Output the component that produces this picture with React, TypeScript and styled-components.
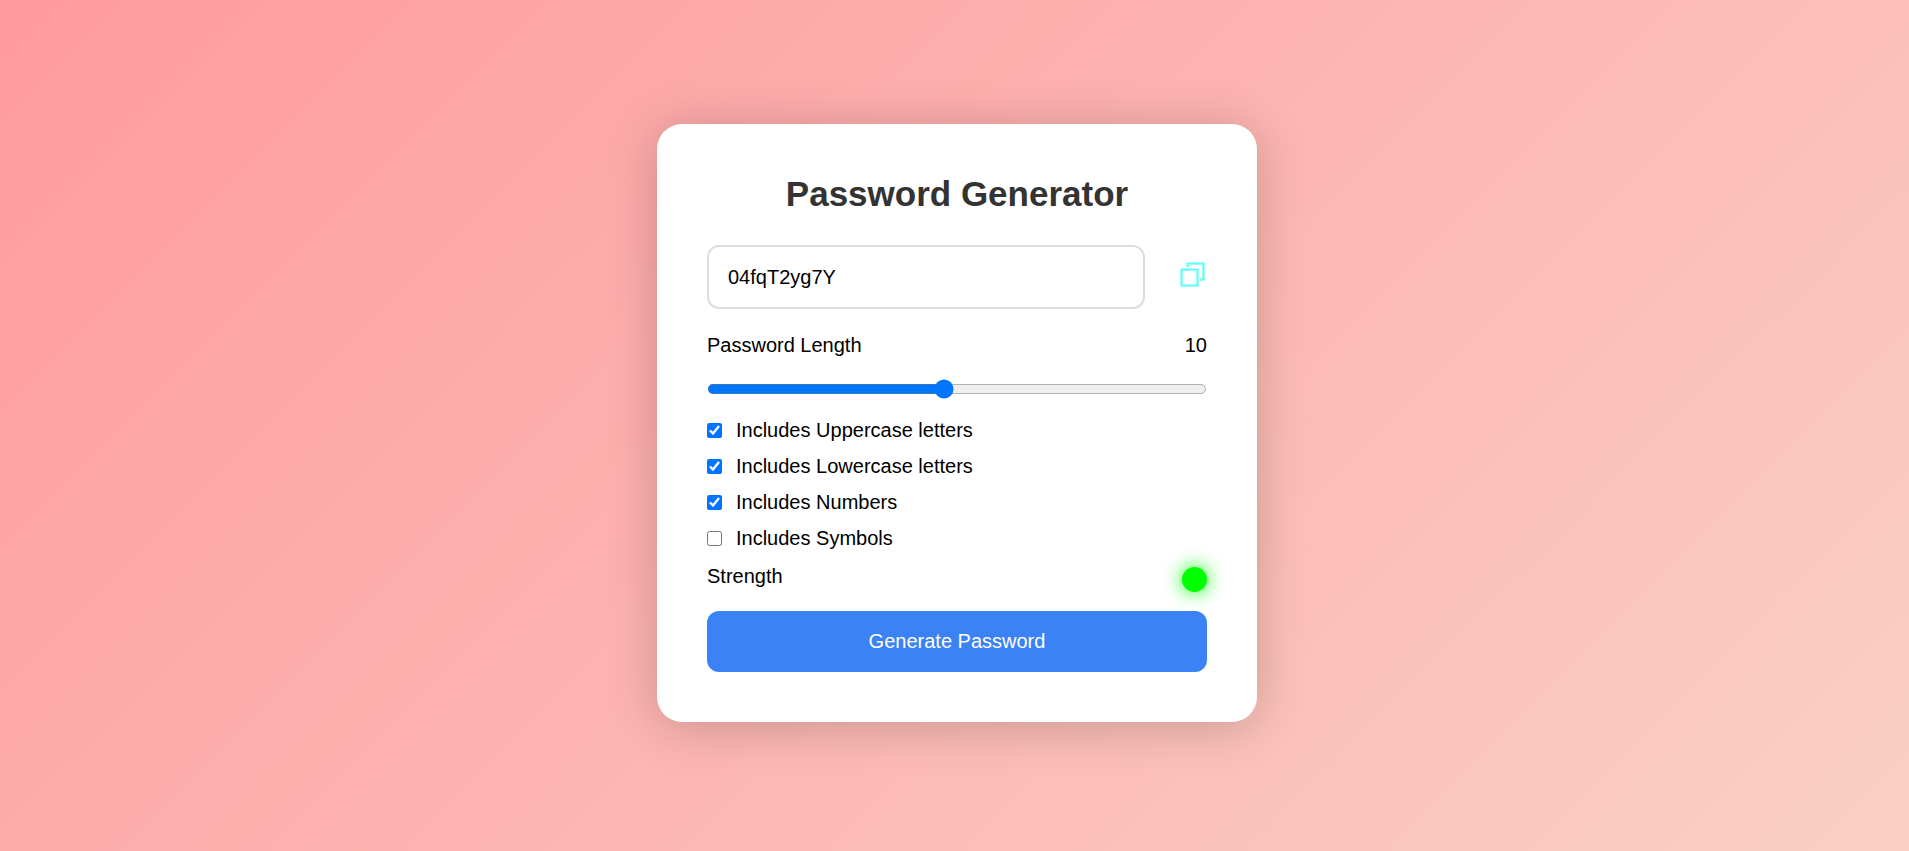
import React, { useState } from "react";
import styled, { createGlobalStyle } from "styled-components";

const GlobalStyle = createGlobalStyle`
  * { box-sizing: border-box; margin: 0; padding: 0; }
  body { font-family: Arial, "Liberation Sans", sans-serif; font-size: 20px; color: #000; }
`;

const Page = styled.main`
  min-height: 100vh;
  padding: 0 0 5px 5px;
  display: flex;
  align-items: center;
  justify-content: center;
  background: linear-gradient(135deg, #ff9a9e, #fad0c4);
`;

const Card = styled.form`
  width: 600px;
  max-width: 100%;
  padding: 50px;
  display: flex;
  flex-direction: column;
  background: #fff;
  border-radius: 25px;
  box-shadow: 0 5px 50px rgba(0, 0, 0, 0.2);
`;

const Title = styled.h1`
  font-size: 35px;
  line-height: 39px;
  color: #333;
  text-align: center;
  margin-bottom: 32px;
`;

const PasswordRow = styled.div`
  display: flex;
  align-items: center;
  gap: 32px;
  margin-bottom: 25px;
`;

const PasswordField = styled.input`
  flex: 1;
  min-width: 0;
  height: 64px;
  padding: 0 19px;
  border: 2px solid #ddd;
  border-radius: 12px;
  font: inherit;
  color: inherit;
`;

const CopyButton = styled.button`
  display: flex;
  padding-bottom: 8px;
  border: 0;
  background: none;
  cursor: pointer;
`;

const Row = styled.div`
  display: flex;
  justify-content: space-between;
  line-height: 23px;
`;

const StrengthRow = styled(Row)`
  height: 27px;
  margin: 15px 0 19px;
`;

const SliderBox = styled.div`
  display: flex;
  margin: 22px 0 19px;
`;

const Slider = styled.input`
  width: 100%;
  height: 16px;
  zoom: 1.25;
`;

const Options = styled.div`
  display: flex;
  flex-direction: column;
  gap: 12px;
`;

const Option = styled.label`
  display: flex;
  align-items: center;
  gap: 14px;
  line-height: 24px;
`;

const CheckBox = styled.input`
  width: 15px;
  height: 15px;
`;

const Indicator = styled.span`
  align-self: flex-end;
  width: 25px;
  height: 25px;
  border-radius: 50%;
  background: #0f0;
  box-shadow: 0 0 19px #0f0;
`;

const GenerateButton = styled.button`
  height: 61px;
  border: 0;
  border-radius: 12px;
  background: #3b82f6;
  color: #fff;
  font: inherit;
  cursor: pointer;
  z-index: 1;
`;

const options = ["Uppercase letters", "Lowercase letters", "Numbers", "Symbols"];

const CopyIcon = () => (
  <svg width="30" height="30" viewBox="0 0 30 30" fill="none" strokeLinejoin="round">
    <g stroke="#c4fffb" strokeWidth="3">
      <path d="M4.5 11.5h16v16h-16z" />
      <path d="M10.5 9V5.5h16v16H23" />
    </g>
    <g stroke="#66fff5" strokeWidth="2">
      <path d="M4.5 11.5h16v16h-16z" />
      <path d="M10.5 9V5.5h16v16H23" />
    </g>
  </svg>
);

export default function App() {
  const [length, setLength] = useState(10);
  return (
    <Page>
      <GlobalStyle />
      <Card onSubmit={(e) => e.preventDefault()}>
        <Title>Password Generator</Title>
        <PasswordRow>
          <PasswordField aria-label="Password" readOnly value="04fqT2yg7Y" />
          <CopyButton type="button" aria-label="Copy password">
            <CopyIcon />
          </CopyButton>
        </PasswordRow>
        <Row>
          <label htmlFor="length">Password Length</label>
          <span>{length}</span>
        </Row>
        <SliderBox>
          <Slider
            id="length"
            type="range"
            min={1}
            max={20}
            value={length}
            onChange={(e) => setLength(Number(e.target.value))}
          />
        </SliderBox>
        <Options>
          {options.map((name) => (
            <Option key={name}>
              <CheckBox type="checkbox" defaultChecked={name !== "Symbols"} />
              Includes {name}
            </Option>
          ))}
        </Options>
        <StrengthRow>
          <span>Strength</span>
          <Indicator />
        </StrengthRow>
        <GenerateButton type="submit">Generate Password</GenerateButton>
      </Card>
    </Page>
  );
}
